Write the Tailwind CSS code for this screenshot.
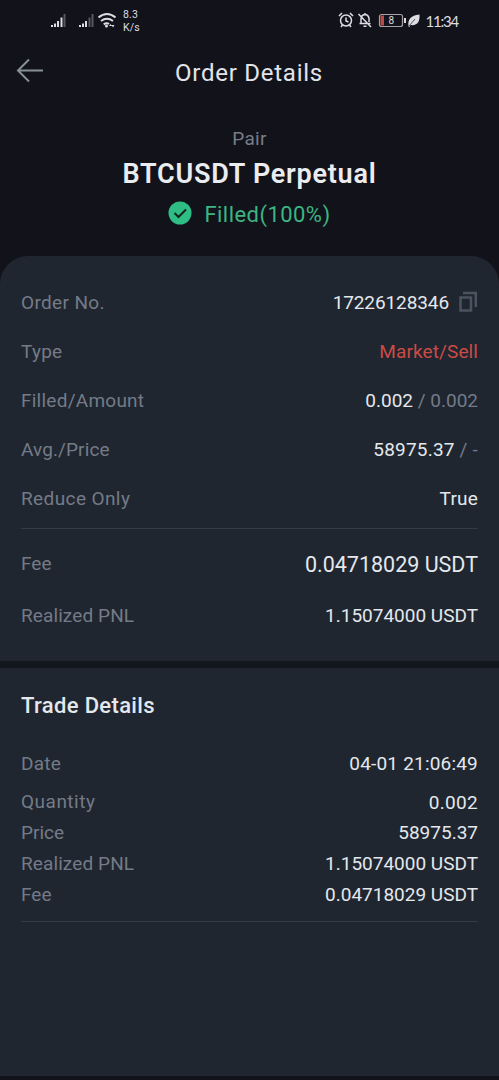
<!DOCTYPE html>
<html lang="en">
<head>
<meta charset="utf-8">
<title>Order Details</title>
<script src="https://cdn.jsdelivr.net/npm/@tailwindcss/browser@4"></script>
</head>
<body class="bg-[#12131a]">
<div class="flex h-[1080px] w-[499px] flex-col overflow-hidden bg-[#12131a] font-['Roboto','Liberation_Sans',sans-serif] text-[19px] whitespace-nowrap">
  <header class="flex h-[42px] shrink-0 items-center justify-between pr-[42px] pl-[50px] text-[#dcdde1]">
    <div class="flex h-full items-center">
      <svg class="h-5 w-[70px]" viewBox="0 0 70 20" fill="currentColor">
        <path d="M1 14h2v2H1zM4 12.500h2V16H4zM7 10h2v6H7zM10.500 6.500h2V16h-2z"/><path opacity=".35" d="M13.500 3h2v13h-2z"/>
        <path d="M29 14h2v2h-2zM32 12.500h2V16h-2zM35 10h2v6h-2z"/><path opacity=".35" d="M38.500 6.500h2V16h-2zM41.500 3h2v13h-2z"/>
        <g fill="none" stroke="currentColor" stroke-width="2"><path d="M48.500 6.500q8.500-7 17 0M51 10q6-4.500 12 0M53.700 13.300q3-2 5.300-.3"/></g>
        <circle cx="56.500" cy="15" r="1.500"/><path d="m59 15 1.500-2 1.500 2zM61.500 14h3L63 16.500z"/>
      </svg>
      <div class="ml-[3px] pb-px text-[10.500px] leading-[13px] tracking-[0.2px]">8.3<br>K/s</div>
    </div>
    <div class="flex h-full items-center">
      <svg class="mb-[3px] h-[18px] w-[84px]" viewBox="0 0 84 18" fill="none" stroke="currentColor" stroke-width="1.500">
        <circle cx="8" cy="9.500" r="5.500"/><path d="M8 6.500v3.500l2.500 1M1 5l3-3M12 2l3 3M4.500 14 3 16M11.500 14l1.500 2"/>
        <path d="M21.500 12.500h11M23 12V8q0-4 4-4.500Q30 3.500 31 7v4M20.500 3l12.500 13M27 2v2M25.500 15.200h3"/>
        <rect x="41.500" y="3.500" width="23" height="12" rx="2" stroke="#a9a0a5" stroke-width="1.200"/>
        <path d="M42.500 4.500H46v10h-3.500z" fill="#b64b47" stroke="none"/>
        <text x="50.500" y="13" fill="currentColor" stroke="none" font-size="10">8</text>
        <path d="M67 7v5" stroke-width="2"/>
        <path d="M70.500 15.500c-1-7 2-11 11-12 .5 7-2 11.500-9 10.500l-1 2z" fill="currentColor" stroke="none"/><path d="m71 15 6-7" stroke="#12131a" stroke-width=".7"/>
      </svg>
      <span class="-mr-[1px] ml-[3px] font-['Lato',sans-serif] text-[15px] leading-5 tracking-[-1.200px]">11:34</span>
    </div>
  </header>

  <div class="flex h-[60px] shrink-0 items-center pl-4">
    <svg class="h-7 w-7" viewBox="0 0 28 28" fill="none" stroke="#869196" stroke-width="2"><path d="M27 12.500H2M13 1.500 2 12.500l11 11"/></svg>
    <h1 class="ml-[131px] pt-px text-[24px] tracking-[0.75px] text-[#e3e4ea]">Order Details</h1>
  </div>

  <section class="flex h-[154px] shrink-0 flex-col items-center pt-[25px]">
    <div class="h-[24px] text-[19px] leading-[24px] tracking-[0.3px] text-[#777c89]">Pair</div>
    <h2 class="mt-[3px] h-[40px] text-[27px] leading-[40px] font-semibold tracking-[0.75px] text-[#eaecf0]">BTCUSDT Perpetual</h2>
    <div class="mt-[6px] flex h-[30px] items-center text-[#3cb583]">
      <svg class="mb-[4px] h-6 w-6" viewBox="0 0 24 24"><circle cx="12" cy="12" r="11.500" fill="#2ebd85"/><path d="m6.500 12 4 4 7.500-7.500" fill="none" stroke="#14241f" stroke-width="2"/></svg>
      <span class="mb-[2px] ml-[12px] text-[22px] tracking-[0.450px]">Filled(100%)</span>
    </div>
  </section>

  <main class="flex grow flex-col rounded-t-[28px] bg-[#1f2630] pt-[23px] text-[#e4e8ed]">
    <div class="flex h-[49px] items-center justify-between px-[21px]">
      <span class="tracking-[0.350px] text-[#747b87]">Order No.</span>
      <div class="flex items-center"><span class="tracking-[-0.1px]">17226128346</span>
        <svg class="mb-[5px] ml-[9px] h-[21px] w-5" viewBox="0 0 20 21" fill="none" stroke="#4b535f" stroke-width="2.500"><path d="M2.500 6.500h10.500v13H2.500zM5 2h12.800v14"/></svg>
      </div>
    </div>
    <div class="flex h-[49px] items-center justify-between px-[21px]"><span class="tracking-[0.250px] text-[#747b87]">Type</span><span class="tracking-[0.1px] text-[#cc4b45]">Market/Sell</span></div>
    <div class="flex h-[49px] items-center justify-between px-[21px]"><span class="tracking-[0.250px] text-[#747b87]">Filled/Amount</span><span>0.002 <span class="text-[#747b87]">/ 0.002</span></span></div>
    <div class="flex h-[49px] items-center justify-between px-[21px]"><span class="tracking-[0.1px] text-[#747b87]">Avg./Price</span><span class="tracking-[0.2px]">58975.37 <span class="text-[#747b87]">/ -</span></span></div>
    <div class="flex h-[49px] items-center justify-between px-[21px]"><span class="tracking-[0.4px] text-[#747b87]">Reduce Only</span><span class="tracking-[0.2px]">True</span></div>
    <div class="mx-[21px] mt-[4px] h-px bg-[#333b43]"></div>
    <div class="mt-[10px] flex h-[50px] items-center justify-between px-[21px]"><span class="text-[#747b87]">Fee</span><span class="pt-[3px] text-[21.500px]">0.04718029 USDT</span></div>
    <div class="flex h-[54px] items-center justify-between px-[21px]"><span class="tracking-[0.1px] text-[#747b87]">Realized PNL</span><span>1.15074000 USDT</span></div>
    <div class="mt-[18px] h-[7px] bg-[#11171d]"></div>
    <h3 class="mt-[20px] h-[36px] px-[21px] text-[22px] leading-[36px] font-medium tracking-[0.350px]">Trade Details</h3>
    <div class="mt-[21px] flex h-[38px] items-center justify-between px-[21px]"><span class="tracking-[0.250px] text-[#747b87]">Date</span><span class="tracking-[0.2px]">04-01 21:06:49</span></div>
    <div class="mt-[4px] flex h-[31px] items-center justify-between px-[21px]"><span class="tracking-[0.5px] text-[#747b87]">Quantity</span><span class="pt-[2px] tracking-[0.3px]">0.002</span></div>
    <div class="flex h-[31px] items-center justify-between px-[21px]"><span class="text-[#747b87]">Price</span><span>58975.37</span></div>
    <div class="flex h-[31px] items-center justify-between px-[21px]"><span class="tracking-[0.1px] text-[#747b87]">Realized PNL</span><span>1.15074000 USDT</span></div>
    <div class="flex h-[31px] items-center justify-between px-[21px]"><span class="text-[#747b87]">Fee</span><span>0.04718029 USDT</span></div>
    <div class="mx-[21px] mt-[10px] h-px bg-[#333b43]"></div>
  </main>
  <footer class="h-1 shrink-0 bg-[#11131b]"></footer>
</div>
</body>
</html>
